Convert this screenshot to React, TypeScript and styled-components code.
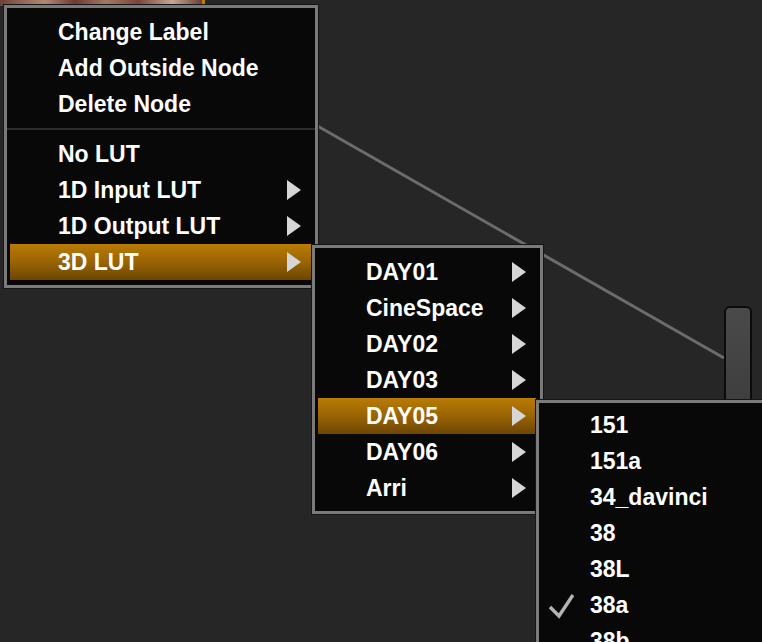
import React from "react";
import styled, { createGlobalStyle } from "styled-components";

interface MenuEntry {
  label: string;
  submenu?: boolean;
  active?: boolean;
  checked?: boolean;
}

type Section = MenuEntry[];

const nodeMenu: Section[] = [
  [{ label: "Change Label" }, { label: "Add Outside Node" }, { label: "Delete Node" }],
  [
    { label: "No LUT" },
    { label: "1D Input LUT", submenu: true },
    { label: "1D Output LUT", submenu: true },
    { label: "3D LUT", submenu: true, active: true },
  ],
];

const folderMenu: Section[] = [
  [
    { label: "DAY01", submenu: true },
    { label: "CineSpace", submenu: true },
    { label: "DAY02", submenu: true },
    { label: "DAY03", submenu: true },
    { label: "DAY05", submenu: true, active: true },
    { label: "DAY06", submenu: true },
    { label: "Arri", submenu: true },
  ],
];

const lutMenu: Section[] = [
  [
    { label: "151" },
    { label: "151a" },
    { label: "34_davinci" },
    { label: "38" },
    { label: "38L" },
    { label: "38a", checked: true },
    { label: "38b" },
  ],
];

function Check() {
  return (
    <CheckMark width="26" height="26" viewBox="0 0 26 26">
      <polyline
        points="2,14 11,23 25,2"
        fill="none"
        stroke="#b4b4b4"
        strokeWidth="3.4"
        strokeLinejoin="miter"
      />
    </CheckMark>
  );
}

interface MenuProps {
  sections: Section[];
  x: number;
  y: number;
  width: number;
  padTop: number;
}

// popup menus sit over the node graph, so they're placed absolutely
function ContextMenu({ sections, x, y, width, padTop }: MenuProps) {
  return (
    <MenuBox $x={x} $y={y} $width={width} $padTop={padTop}>
      {sections.map((section, i) => (
        <React.Fragment key={i}>
          {i > 0 && <Separator />}
          {section.map((item) => (
            <Item key={item.label} $active={!!item.active}>
              {item.checked && <Check />}
              <Label>{item.label}</Label>
              {item.submenu && <Arrow />}
            </Item>
          ))}
        </React.Fragment>
      ))}
    </MenuBox>
  );
}

export default function App() {
  return (
    <>
      <GlobalStyle />
      <Canvas>
        <NodeThumb />
        <Wire width="762" height="642">
          <line x1="300" y1="116" x2="724" y2="358" stroke="#6c6c6c" strokeWidth="3" />
        </Wire>
        <InputPort />
        <ContextMenu sections={nodeMenu} x={4} y={5} width={314} padTop={6} />
        <ContextMenu sections={folderMenu} x={312} y={245} width={231} padTop={6} />
        <ContextMenu sections={lutMenu} x={536} y={400} width={270} padTop={4} />
      </Canvas>
    </>
  );
}

const GlobalStyle = createGlobalStyle`
  html, body {
    margin: 0;
    padding: 0;
    background: #262626;
    overflow: hidden;
  }
`;

const Canvas = styled.div`
  position: relative;
  width: 762px;
  height: 642px;
  overflow: hidden;
  background: #262626;
  font-family: "Liberation Sans", Arial, sans-serif;
`;

const NodeThumb = styled.div`
  position: absolute;
  left: -10px;
  top: -60px;
  width: 212px;
  height: 66px;
  border-right: 3px solid #c27c08;
  background: linear-gradient(
    90deg,
    #5a2f2a 0%,
    #8a5a4c 12%,
    #b08876 26%,
    #6e3a30 40%,
    #a27a66 55%,
    #7b4438 70%,
    #c4a894 86%,
    #6a3e34 100%
  );
`;

const Wire = styled.svg`
  position: absolute;
  left: 0;
  top: 0;
`;

const InputPort = styled.div`
  position: absolute;
  left: 724px;
  top: 306px;
  width: 24px;
  height: 120px;
  border: 2px solid #0b0b0b;
  border-radius: 6px 6px 0 0;
  background: linear-gradient(#4a4a4a, #3b3b3b);
`;

const MenuBox = styled.div<{ $x: number; $y: number; $width: number; $padTop: number }>`
  position: absolute;
  left: ${(p) => p.$x}px;
  top: ${(p) => p.$y}px;
  width: ${(p) => p.$width}px;
  box-sizing: border-box;
  display: flex;
  flex-direction: column;
  padding: ${(p) => p.$padTop}px 0 5px;
  background: #080808;
  border: 3px solid #7a7a7a;
  box-shadow: 0 0 0 1px #151515;
`;

const Separator = styled.div`
  height: 14px;
  display: flex;
  align-items: center;

  &::after {
    content: "";
    flex: 1;
    height: 2px;
    background: #2c2c2c;
  }
`;

const Item = styled.div<{ $active: boolean }>`
  position: relative;
  display: flex;
  align-items: center;
  height: 36px;
  margin: 0 4px 0 3px;
  padding: 0 10px 0 48px;
  background: ${(p) =>
    p.$active ? "linear-gradient(#b97b05, #9a6404 50%, #6c4503)" : "transparent"};
`;

const Label = styled.span`
  flex: 1;
  color: #ffffff;
  font-size: 23px;
  font-weight: bold;
  white-space: nowrap;
`;

const Arrow = styled.span`
  width: 0;
  height: 0;
  border-top: 10px solid transparent;
  border-bottom: 10px solid transparent;
  border-left: 14px solid #d6d6d6;
`;

const CheckMark = styled.svg`
  position: absolute;
  left: 6px;
  top: 6px;
`;
